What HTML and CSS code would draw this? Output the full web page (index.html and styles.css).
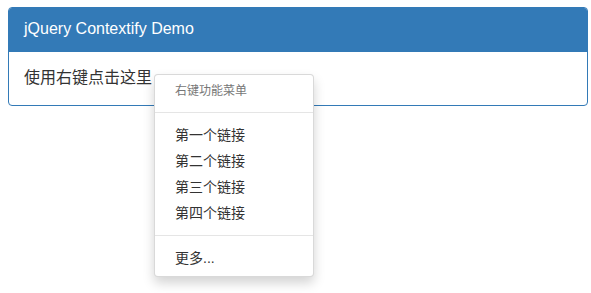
FILE: index.html
```html
<!DOCTYPE html>
<html lang="zh">
<head>
    <meta charset="UTF-8">
    <title>jQuery Contextify Demo</title>
    <link rel="stylesheet" href="styles.css">
</head>
<body>
    <div class="panel">
        <div class="panel-heading">jQuery Contextify Demo</div>
        <div class="panel-body">使用右键点击这里</div>
    </div>

    <ul class="context-menu">
        <li class="menu-header">右键功能菜单</li>
        <li class="divider"></li>
        <li><a href="#">第一个链接</a></li>
        <li><a href="#">第二个链接</a></li>
        <li><a href="#">第三个链接</a></li>
        <li><a href="#">第四个链接</a></li>
        <li class="divider"></li>
        <li><a href="#">更多...</a></li>
    </ul>
</body>
</html>
```

FILE: styles.css
```css
body {
    margin: 0;
    padding: 7px 3px 0 8px;
    font-family: 'Liberation Sans', Arial, 'Noto Sans CJK SC', sans-serif;
    font-size: 16px;
    line-height: 1.42857143;
    color: #333;
    background-color: #fff;
}

.panel {
    width: 578px;
    border: 1px solid #337ab7;
    border-radius: 4px;
}

.panel-heading {
    padding: 10px 15px;
    background-color: #337ab7;
    border-bottom: 1px solid #337ab7;
    border-radius: 3px 3px 0 0;
    color: #fff;
}

.panel-body {
    padding: 15px;
}

/* menu contextuel, posé par-dessus la page */
.context-menu {
    position: absolute;
    left: 154px;
    top: 74px;
    margin: 0;
    padding: 5px 0;
    min-width: 160px;
    box-sizing: border-box;
    list-style: none;
    font-size: 14px;
    background-color: #fff;
    border: 1px solid rgba(0, 0, 0, 0.15);
    border-radius: 4px;
    box-shadow: 0 6px 12px rgba(0, 0, 0, 0.175);
}

.menu-header {
    padding: 3px 20px;
    font-size: 12px;
    color: #777;
}

.divider {
    height: 1px;
    margin: 9px 0;
    background-color: #e5e5e5;
}

.context-menu a {
    display: block;
    padding: 3px 20px;
    color: #333;
    text-decoration: none;
    white-space: nowrap;
}

.context-menu a:hover {
    background-color: #f5f5f5;
}
```
